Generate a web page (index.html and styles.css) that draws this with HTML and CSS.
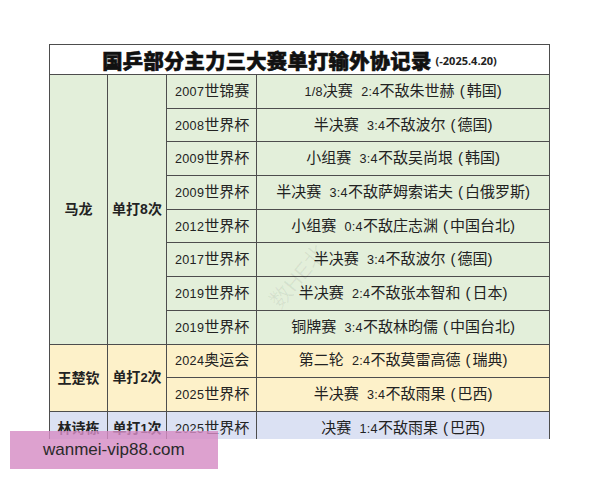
FILE: index.html
```html
<!DOCTYPE html>
<html lang="zh">
<head>
<meta charset="utf-8">
<link rel="stylesheet" href="styles.css">
</head>
<body>
<div class="page">
  <div class="clip">
    <table class="rec">
      <colgroup>
        <col class="c1"><col class="c2"><col class="c3"><col class="c4">
      </colgroup>
      <tr class="title-row">
        <td colspan="4" class="title"><span class="big">国乒部分主力三大赛单打输外协记录</span><span class="date">(-2025.4.20)</span></td>
      </tr>
      <tr class="g">
        <td rowspan="8" class="name">马龙</td>
        <td rowspan="8" class="name">单打8次</td>
        <td class="ev"><span class="n">2007</span>世锦赛</td><td class="res"><span class="n">1/8</span>决赛&nbsp;&nbsp;<span class="n">2:4</span>不敌朱世赫<span class="p">(</span>韩国)</td>
      </tr>
      <tr class="g"><td class="ev"><span class="n">2008</span>世界杯</td><td class="res">半决赛&nbsp;&nbsp;<span class="n">3:4</span>不敌波尔<span class="p">(</span>德国)</td></tr>
      <tr class="g"><td class="ev"><span class="n">2009</span>世界杯</td><td class="res">小组赛&nbsp;&nbsp;<span class="n">3:4</span>不敌吴尚垠<span class="p">(</span>韩国)</td></tr>
      <tr class="g"><td class="ev"><span class="n">2009</span>世界杯</td><td class="res">半决赛&nbsp;&nbsp;<span class="n">3:4</span>不敌萨姆索诺夫<span class="p">(</span>白俄罗斯)</td></tr>
      <tr class="g"><td class="ev"><span class="n">2012</span>世界杯</td><td class="res">小组赛&nbsp;&nbsp;<span class="n">0:4</span>不敌庄志渊<span class="p">(</span>中国台北)</td></tr>
      <tr class="g"><td class="ev"><span class="n">2017</span>世界杯</td><td class="res">半决赛&nbsp;&nbsp;<span class="n">3:4</span>不敌波尔<span class="p">(</span>德国)</td></tr>
      <tr class="g"><td class="ev"><span class="n">2019</span>世界杯</td><td class="res">半决赛&nbsp;&nbsp;<span class="n">2:4</span>不敌张本智和<span class="p">(</span>日本)</td></tr>
      <tr class="g"><td class="ev"><span class="n">2019</span>世界杯</td><td class="res">铜牌赛&nbsp;&nbsp;<span class="n">3:4</span>不敌林昀儒<span class="p">(</span>中国台北)</td></tr>
      <tr class="y">
        <td rowspan="2" class="name">王楚钦</td>
        <td rowspan="2" class="name">单打<span class="nb">2</span>次</td>
        <td class="ev"><span class="n">2024</span>奥运会</td><td class="res">第二轮&nbsp;&nbsp;<span class="n">2:4</span>不敌莫雷高德<span class="p">(</span>瑞典)</td>
      </tr>
      <tr class="y"><td class="ev"><span class="n">2025</span>世界杯</td><td class="res">半决赛&nbsp;&nbsp;<span class="n">3:4</span>不敌雨果<span class="p">(</span>巴西)</td></tr>
      <tr class="b">
        <td class="name">林诗栋</td>
        <td class="name">单打<span class="nb">1</span>次</td>
        <td class="ev"><span class="n">2025</span>世界杯</td><td class="res">决赛&nbsp;&nbsp;<span class="n">1:4</span>不敌雨果<span class="p">(</span>巴西)</td>
      </tr>
    </table>
    <span class="faint">数HE北</span>
  </div>
  <div class="wm">wanmei-vip88.com</div>
</div>
</body>
</html>
```

FILE: styles.css
```css
html, body {
  margin: 0;
  padding: 0;
  background: #ffffff;
}
.page {
  position: relative;
  width: 600px;
  height: 480px;
  padding: 44px 0 0 49px;
  box-sizing: border-box;
  font-family: "Liberation Sans", "Noto Sans CJK SC", sans-serif;
  color: #222;
}
.clip {
  position: relative;
  width: 501px;
  height: 395px;
  overflow: hidden;
}
.rec {
  border-collapse: collapse;
  table-layout: fixed;
  width: 500px;
  border: 1.5px solid #5a5a5a;
}
.c1 { width: 58px; }
.c2 { width: 59px; }
.c3 { width: 90px; }
.c4 { width: 293px; }
.rec td {
  border: 1px solid #4d4d4d;
  padding: 0;
  height: 32.7px;
  font-size: 15px;
  line-height: 18px;
  white-space: nowrap;
}
.title-row td {
  height: 29px;
  line-height: 18px;
}
.title {
  background: #ffffff;
  text-align: center;
}
.big {
  display: inline-block;
  vertical-align: middle;
  font-family: "Noto Sans CJK SC", sans-serif;
  font-weight: 900;
  font-size: 20.3px;
  line-height: 26px;
  letter-spacing: 0.3px;
  color: #111;
  -webkit-text-stroke: 0.6px #111;
}
.date {
  display: inline-block;
  vertical-align: middle;
  font-family: "Open Sans", "Liberation Sans", sans-serif;
  font-weight: 700;
  font-size: 11px;
  line-height: 16px;
  margin-left: 4px;
  margin-top: 3px;
  color: #222;
}
.g td { background: #e3efda; }
.y td { background: #fdf1c9; }
.b td { background: #dbe1f3; }
.name {
  text-align: center;
  font-weight: 700;
  font-size: 14px !important;
}
.nb {
  font-size: 13px;
}
.ev {
  padding-left: 8px !important;
}
.res {
  text-align: center;
}
.n {
  font-size: 12.6px;
  letter-spacing: 0.3px;
}
.p {
  margin-left: 5px;
  margin-right: 2px;
}
.faint {
  position: absolute;
  left: 210px;
  top: 215px;
  font-size: 22px;
  color: rgba(0, 0, 0, 0.06);
  transform: rotate(-50deg);
}
.wm {
  position: absolute;
  left: 10px;
  top: 431px;
  width: 208px;
  height: 38px;
  background: rgba(214, 140, 196, 0.82);
  font-family: "Liberation Sans", Arial, sans-serif;
  font-size: 17px;
  line-height: 38px;
  padding-left: 33px;
  box-sizing: border-box;
  color: #2a2a2a;
}
```
